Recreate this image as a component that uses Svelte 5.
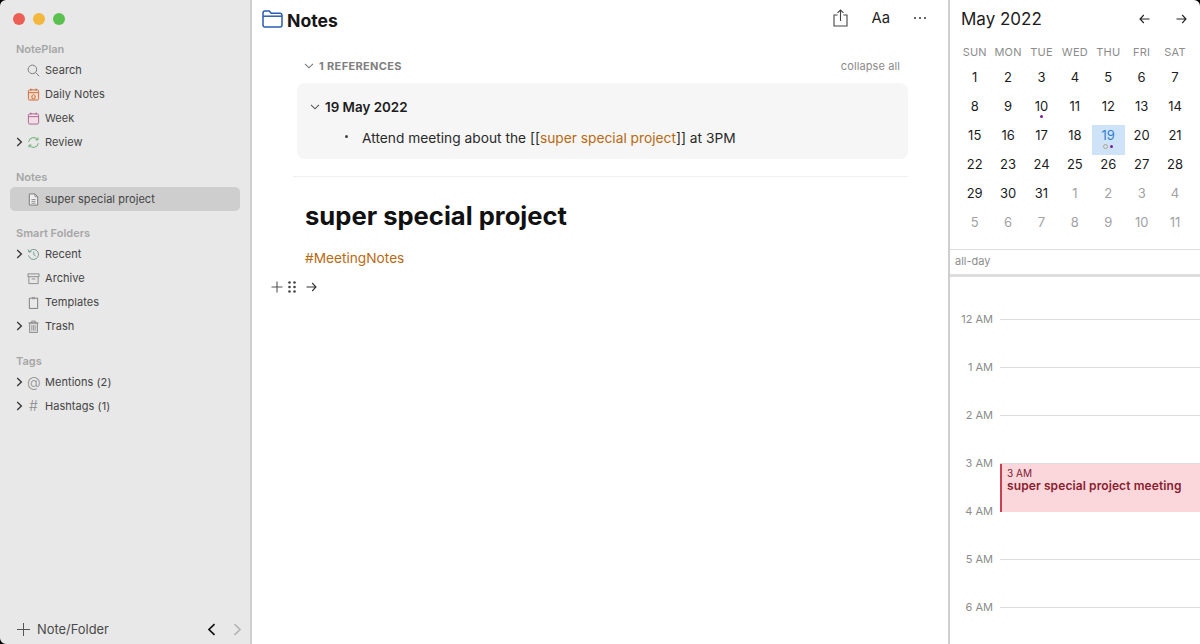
<script lang="ts">
  const weekdays = ['SUN', 'MON', 'TUE', 'WED', 'THU', 'FRI', 'SAT'];

  interface Day {
    n: number;
    muted?: boolean;
    today?: boolean;
    dot?: boolean;
  }

  const days: Day[] = [];
  for (let n = 1; n <= 31; n++) {
    days.push({ n, today: n === 19, dot: n === 10 });
  }
  for (let n = 1; n <= 11; n++) {
    days.push({ n, muted: true });
  }

  const hours = ['12 AM', '1 AM', '2 AM', '3 AM', '4 AM', '5 AM', '6 AM'];
</script>

{#snippet chevron()}
  <svg class="chev" width="7" height="10" viewBox="0 0 7 10"><path d="M1.2 1 5.4 5 1.2 9" fill="none" stroke="#333" stroke-width="1.3" /></svg>
{/snippet}

{#snippet down(color = '#666')}
  <svg width="10" height="6" viewBox="0 0 10 6"><path d="M1 .8 5 4.8 9 .8" fill="none" stroke={color} stroke-width="1.1" /></svg>
{/snippet}

<div class="window">
  <aside class="sidebar">
    <div class="lights">
      <span class="light red"></span>
      <span class="light yellow"></span>
      <span class="light green"></span>
    </div>

    <section class="group first">
      <h3>NotePlan</h3>
      <div class="row">
        <span class="caret"></span>
        <svg class="icon" viewBox="0 0 14 14" fill="none" stroke="#777" stroke-width="1"><circle cx="5.8" cy="5.8" r="4.6" /><path d="m9.2 9.2 4 4" /></svg>
        Search
      </div>
      <div class="row">
        <span class="caret"></span>
        <svg class="icon" viewBox="0 0 14 14" fill="#f6dccb" stroke="#c8683c" stroke-width="1"><rect x="1.5" y="2" width="11" height="11" rx="1.5" /><path d="M1.5 5h11M4.2.6v2.4M9.8.6v2.4" /><path d="m4.6 9 2.4-2 2.4 2M5.4 8.6v3h3.2v-3" fill="none" stroke-width=".9" /></svg>
        Daily Notes
      </div>
      <div class="row">
        <span class="caret"></span>
        <svg class="icon" viewBox="0 0 14 14" fill="#f3dde6" stroke="#a8648a" stroke-width="1"><rect x="1.5" y="2" width="11" height="11" rx="1.5" /><path d="M1.5 5h11M4.2.6v2.4M9.8.6v2.4" /></svg>
        Week
      </div>
      <div class="row">
        <span class="caret">{@render chevron()}</span>
        <svg class="icon" viewBox="0 0 14 14" fill="none" stroke="#5aa868" stroke-width="1"><path d="M1.8 6.2A5.3 5.3 0 0 1 11.4 4M12.2 7.8A5.3 5.3 0 0 1 2.6 10" /><path d="M11.8 1.6V4.2H9.2M2.2 12.4V9.8H4.8" /></svg>
        Review
      </div>
    </section>

    <section class="group notes">
      <h3>Notes</h3>
      <div class="row selected">
        <span class="caret"></span>
        <svg class="icon" viewBox="0 0 14 14" fill="#eee" stroke="#777" stroke-width="1"><path d="M2.5 1h6l3 3v9h-9z" /><path d="M8.5 1v3h3M4.8 7h4.4M4.8 9h4.4M4.8 11h4.4" fill="none" stroke-width=".8" /></svg>
        <span class="selected-label">super special project</span>
      </div>
    </section>

    <section class="group smart">
      <h3>Smart Folders</h3>
      <div class="row">
        <span class="caret">{@render chevron()}</span>
        <svg class="icon" viewBox="0 0 14 14" fill="none" stroke="#6a9a88" stroke-width="1"><path d="M2.2 4.4A5.4 5.4 0 1 1 1.7 8" /><path d="M1.2 1.6l1 2.9 2.7-.8M7.3 4v3.3l2 1.4" /></svg>
        Recent
      </div>
      <div class="row">
        <span class="caret"></span>
        <svg class="icon" viewBox="0 0 14 14" fill="none" stroke="#888" stroke-width="1"><path d="M1 2h12v3H1zM2 5v7.5h10V5M5 7.5h4" /></svg>
        Archive
      </div>
      <div class="row">
        <span class="caret"></span>
        <svg class="icon" viewBox="0 0 14 14" fill="none" stroke="#777" stroke-width="1"><path d="M4.6 2.4H2.5v11h9v-11H9.4" /><rect x="4.8" y="1" width="4.4" height="2.4" rx=".6" fill="#999" stroke="none" /></svg>
        Templates
      </div>
      <div class="row">
        <span class="caret">{@render chevron()}</span>
        <svg class="icon" viewBox="0 0 14 14" fill="#ddd" stroke="#888" stroke-width="1"><path d="M1.5 3.2h11M5 3V1.2h4V3M2.8 3.2v10.3h8.4V3.2z" /><path d="M5.2 5.5v6M7 5.5v6M8.8 5.5v6" fill="none" stroke-width=".8" /></svg>
        Trash
      </div>
    </section>

    <section class="group tags">
      <h3>Tags</h3>
      <div class="row">
        <span class="caret">{@render chevron()}</span>
        <span class="glyph at">@</span>
        Mentions (2)
      </div>
      <div class="row">
        <span class="caret">{@render chevron()}</span>
        <span class="glyph hash">#</span>
        Hashtags (1)
      </div>
    </section>

    <footer class="side-foot">
      <svg width="13" height="13" viewBox="0 0 13 13"><path d="M6.5 0v13M0 6.5h13" stroke="#555" stroke-width="1" /></svg>
      <span class="new-label">Note/Folder</span>
      <svg class="back" width="9" height="13" viewBox="0 0 9 13"><path d="M7.5 1.2 2 6.5l5.5 5.3" fill="none" stroke="#111" stroke-width="1.7" /></svg>
      <svg class="forward" width="9" height="13" viewBox="0 0 9 13"><path d="M1.5 1.2 7 6.5l-5.5 5.3" fill="none" stroke="#b5b5b5" stroke-width="1.7" /></svg>
    </footer>
  </aside>

  <main class="main">
    <header class="topbar">
      <svg class="folder" width="21" height="18" viewBox="0 0 21 18" fill="none" stroke="#2a5cb4" stroke-width="1.5"><path d="M1 3a2 2 0 0 1 2-2h4.2l2 2.2H18a2 2 0 0 1 2 2V15a2 2 0 0 1-2 2H3a2 2 0 0 1-2-2z" /><path d="M1 6.2h19" /></svg>
      <h1>Notes</h1>
      <div class="tools">
        <svg class="share" width="15" height="18" viewBox="0 0 15 18" fill="none" stroke="#444" stroke-width="1.1"><path d="M4.6 6H1v11h13V6h-3.6M7.5 12V1M4.5 3.8 7.5 1l3 2.8" /></svg>
        <span class="aa">Aa</span>
        <span class="more"><i></i><i></i><i></i></span>
      </div>
    </header>

    <div class="content">
      <div class="refs-head">
        {@render down('#777')}
        <span class="refs-title">1 REFERENCES</span>
        <span class="collapse">collapse all</span>
      </div>

      <div class="ref-card">
        <div class="ref-date">
          {@render down('#555')}
          <strong>19 May 2022</strong>
        </div>
        <div class="ref-line">
          <span class="bullet"></span>
          <span>Attend meeting about the [[<span class="link">super special project</span>]] at 3PM</span>
        </div>
      </div>

      <hr />

      <h2>super special project</h2>
      <p class="tag">#MeetingNotes</p>

      <div class="editor-line">
        <svg width="12" height="12" viewBox="0 0 12 12"><path d="M6 .5v11M.5 6h11" stroke="#555" stroke-width="1.1" /></svg>
        <svg class="grip" width="8" height="12" viewBox="0 0 8 12" fill="#444"><circle cx="1.5" cy="1.5" r="1.3" /><circle cx="6.5" cy="1.5" r="1.3" /><circle cx="1.5" cy="6" r="1.3" /><circle cx="6.5" cy="6" r="1.3" /><circle cx="1.5" cy="10.5" r="1.3" /><circle cx="6.5" cy="10.5" r="1.3" /></svg>
        <svg class="arrow" width="11" height="10" viewBox="0 0 11 10" fill="none" stroke="#333" stroke-width="1.1"><path d="M.5 5h9.5M6.2 1 10 5 6.2 9" /></svg>
      </div>
    </div>
  </main>

  <aside class="calendar">
    <div class="cal-head">
      <span class="month">May 2022</span>
      <svg class="nav-prev" width="11" height="10" viewBox="0 0 11 10" fill="none" stroke="#222" stroke-width="1.1"><path d="M10.5 5H1M4.8 1 1 5l3.8 4" /></svg>
      <svg class="nav-next" width="11" height="10" viewBox="0 0 11 10" fill="none" stroke="#222" stroke-width="1.1"><path d="M.5 5H10M6.2 1 10 5 6.2 9" /></svg>
    </div>

    <div class="weekdays">
      {#each weekdays as d}
        <span>{d}</span>
      {/each}
    </div>

    <div class="days">
      {#each days as day}
        <div class="day" class:muted={day.muted} class:today={day.today}>
          {day.n}
          {#if day.dot}
            <span class="dots"><i class="purple"></i></span>
          {/if}
          {#if day.today}
            <span class="dots"><i class="ring"></i><i class="purple"></i></span>
          {/if}
        </div>
      {/each}
    </div>

    <div class="allday">all-day</div>

    <div class="timeline">
      {#each hours as h}
        <div class="hour">
          <span class="hour-label">{h}</span>
          <span class="hour-line"></span>
        </div>
      {/each}
      <div class="event">
        <span class="event-time">3 AM</span>
        <span class="event-title">super special project meeting</span>
      </div>
    </div>
  </aside>

  <span class="corner tl"></span>
  <span class="corner bl"></span>
  <span class="corner tr"></span>
</div>

<style>
  :global(body) {
    margin: 0;
    background: #fff;
  }

  .window {
    position: relative;
    display: flex;
    width: 1200px;
    height: 644px;
    overflow: hidden;
    font-family: Inter, 'Liberation Sans', sans-serif;
    color: #1c1c1c;
    background: #fff;
  }

  /* sidebar */
  .sidebar {
    position: relative;
    display: flex;
    flex-direction: column;
    box-sizing: border-box;
    width: 252px;
    flex-shrink: 0;
    background: #e8e8e8;
    border-right: 2px solid #cfcfcf;
  }

  .lights {
    display: flex;
    gap: 8px;
    padding: 13px 0 0 13px;
    height: 12px;
  }

  .light {
    width: 12px;
    height: 12px;
    border-radius: 50%;
  }

  .red { background: #ec5f57; }
  .yellow { background: #f2b73c; }
  .green { background: #5bc04f; }

  .group h3 {
    margin: 0;
    padding-left: 16px;
    height: 18px;
    line-height: 18px;
    font-size: 11px;
    font-weight: 600;
    color: #a6a6a6;
  }

  .group.first { margin-top: 15px; }
  .group.notes { margin-top: 14px; }
  .group.smart { margin-top: 18px; }
  .group.tags { margin-top: 14px; }

  .group.notes h3 {
    height: 19px;
  }

  .row {
    display: flex;
    align-items: center;
    height: 24px;
    font-size: 11px;
    color: #444;
    letter-spacing: 0.05px;
  }

  .group.smart h3 { height: 9px; line-height: 9px; margin-bottom: 4px; }

  .row.selected {
    margin: 0 10px;
    background: #cecece;
    border-radius: 5px;
  }

  .selected-label { margin-top: -1px; }

  .row.selected .caret { width: 17px; padding: 0; }

  .caret {
    display: flex;
    align-items: center;
    justify-content: flex-start;
    width: 27px;
    padding-left: 16px;
    box-sizing: border-box;
  }

  .icon {
    width: 13px;
    height: 13px;
    margin-right: 5px;
    flex-shrink: 0;
  }

  .glyph {
    display: inline-block;
    width: 13px;
    margin: -2px 5px 0 0;
    text-align: center;
    color: #8a8a8a;
    font-size: 14px;
    font-weight: 300;
  }

  .side-foot {
    display: flex;
    align-items: center;
    margin-top: auto;
    padding: 0 8px 8px 17px;
    height: 14px;
  }

  .new-label {
    margin-left: 7px;
    font-size: 12.9px;
    color: #4a4a4a;
  }

  .back { margin-left: auto; }
  .forward { margin-left: 17px; }

  /* main column */
  .main {
    display: flex;
    flex-direction: column;
    flex: 1;
    min-width: 0;
    background: #fff;
  }

  .topbar {
    display: flex;
    align-items: center;
    height: 40px;
    padding: 0 22px 0 10px;
  }

  .folder { margin-top: -2px; }

  .topbar h1 {
    margin: 0 0 0 4px;
    font-size: 17.6px;
    font-weight: 700;
    color: #161616;
  }

  .tools {
    display: flex;
    align-items: center;
    margin-left: auto;
    margin-top: -4px;
  }

  .aa {
    margin-left: 23px;
    font-size: 14.8px;
    line-height: 16px;
    margin-bottom: 1px;
    color: #222;
  }

  .more {
    display: flex;
    gap: 3px;
    margin-left: 24px;
  }

  .more i {
    width: 2px;
    height: 2px;
    background: #333;
    border-radius: 50%;
  }

  .content {
    padding: 19px 40px 0 41px;
  }

  .refs-head {
    display: flex;
    align-items: center;
    height: 14px;
    padding: 0 8px 0 11px;
  }

  .refs-title {
    margin-left: 5px;
    font-size: 11px;
    font-weight: 700;
    color: #808080;
    letter-spacing: 0.35px;
  }

  .collapse {
    margin-left: auto;
    font-size: 11px;
    color: #8a8a8a;
    letter-spacing: 0.1px;
  }

  .ref-card {
    box-sizing: border-box;
    height: 76px;
    margin: 10px 0 0 4px;
    padding: 15px 0 0 13px;
    background: #f6f6f6;
    border-radius: 8px;
  }

  .ref-date {
    display: flex;
    align-items: center;
    gap: 5px;
    height: 18px;
    font-size: 13.4px;
    color: #1c1c1c;
  }

  .ref-date strong { font-weight: 600; }

  .ref-line {
    display: flex;
    align-items: center;
    height: 20px;
    margin-top: 12px;
    font-size: 13.75px;
    color: #2a2a2a;
  }

  .bullet {
    width: 3px;
    height: 3px;
    margin: 0 14px 4px 35px;
    background: #444;
    border-radius: 50%;
  }

  .link,
  .tag {
    color: #b86a12;
  }

  hr {
    height: 1px;
    margin: 17px 0 0;
    background: #f0f0f0;
    border: 0;
  }

  h2 {
    margin: 22px 0 0 12px;
    font-size: 25.6px;
    line-height: 34px;
    font-weight: 700;
    color: #111;
  }

  .tag {
    margin: 16px 0 0 12px;
    font-size: 13.7px;
    line-height: 18px;
  }

  .editor-line {
    display: flex;
    align-items: center;
    height: 14px;
    margin: 13px 0 0 -22px;
  }

  .grip { margin-left: 5px; }
  .arrow { margin-left: 10px; }

  /* calendar */
  .calendar {
    box-sizing: border-box;
    width: 252px;
    flex-shrink: 0;
    border-left: 2px solid #cfcfcf;
    background: #fff;
  }

  .cal-head {
    display: flex;
    align-items: center;
    height: 38px;
    padding-left: 11px;
  }

  .month {
    font-size: 17px;
    color: #1c1c1c;
  }

  .nav-prev { margin-left: auto; }

  .nav-next {
    margin-left: 26px;
    margin-right: 13px;
  }

  .weekdays,
  .days {
    display: grid;
    grid-template-columns: repeat(7, 33.4px);
    padding-left: 8px;
  }

  .weekdays {
    height: 16px;
    align-items: center;
    margin: 6px 0 7px;
    font-size: 11px;
    color: #8c8c8c;
    text-align: center;
    letter-spacing: 0.2px;
  }

  .days {
    grid-auto-rows: 29px;
  }

  .day {
    position: relative;
    height: 29px;
    line-height: 20px;
    text-align: center;
    font-size: 13px;
    color: #1c1c1c;
  }

  .day.muted { color: #a2a2a2; }

  .day.today {
    height: 30px;
    color: #2f7fd0;
    background: #cfe3f8;
  }

  .dots {
    position: absolute;
    left: 0;
    right: 0;
    bottom: 7px;
    display: flex;
    justify-content: center;
    gap: 2px;
  }

  .today .dots { bottom: 6px; }

  .dots i {
    width: 3px;
    height: 3px;
    border-radius: 50%;
  }

  .dots .purple { background: #7a1f9c; margin-top: 1px; }

  .dots .ring {
    box-sizing: border-box;
    width: 5px;
    height: 5px;
    border: 1px solid #b0a58a;
  }

  .allday {
    box-sizing: border-box;
    height: 28px;
    margin-top: 8px;
    padding: 5px 0 0 5px;
    line-height: 13px;
    font-size: 11px;
    color: #8c8c8c;
    border-top: 1px solid #dcdcdc;
    border-bottom: 3px solid #dedede;
  }

  .timeline {
    position: relative;
    padding-top: 18px;
  }

  .hour {
    display: flex;
    align-items: center;
    height: 48px;
  }

  .hour-label {
    width: 43px;
    text-align: right;
    font-size: 11px;
    color: #8c8c8c;
  }

  .hour-line {
    flex: 1;
    height: 1px;
    margin-left: 7px;
    background: #dcdcdc;
  }

  .event {
    position: absolute;
    top: 187px;
    left: 50px;
    right: 0;
    box-sizing: border-box;
    display: flex;
    flex-direction: column;
    height: 48px;
    padding: 3px 0 0 5px;
    background: #fbd7db;
    border-left: 2px solid #c9404f;
  }

  .event-time {
    font-size: 10px;
    line-height: 12px;
    color: #7d2030;
  }

  .event-title {
    font-size: 12px;
    line-height: 14px;
    font-weight: 600;
    letter-spacing: 0.1px;
    color: #8a1c30;
  }

  /* window corners against the black desktop */
  .corner {
    position: absolute;
    width: 6px;
    height: 6px;
    background: #000;
  }

  .tl { top: 0; left: 0; clip-path: path('M0 0H6A6 6 0 0 0 0 6Z'); }
  .bl { bottom: 0; left: 0; clip-path: path('M0 6H6A6 6 0 0 1 0 0Z'); }
  .tr { top: 0; right: 0; clip-path: path('M0 0H6V6A6 6 0 0 0 0 0Z'); }
</style>
